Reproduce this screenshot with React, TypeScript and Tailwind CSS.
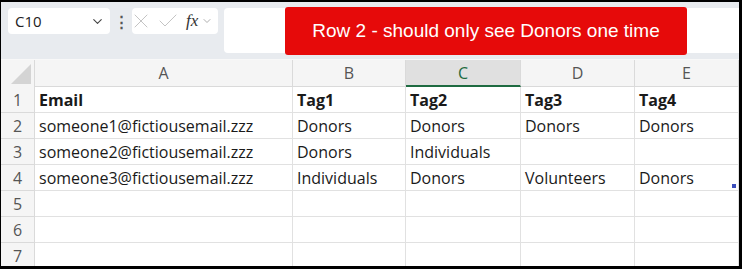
import { ChevronDown, X, Check } from "lucide-react";

const cols = ["A", "B", "C", "D", "E"];

const rows: { cells: string[]; bold?: boolean }[] = [
  { cells: ["Email", "Tag1", "Tag2", "Tag3", "Tag4"], bold: true },
  { cells: ["someone1@fictiousemail.zzz", "Donors", "Donors", "Donors", "Donors"] },
  { cells: ["someone2@fictiousemail.zzz", "Donors", "Individuals", "", ""] },
  { cells: ["someone3@fictiousemail.zzz", "Individuals", "Donors", "Volunteers", "Donors"] },
  { cells: ["", "", "", "", ""] },
  { cells: ["", "", "", "", ""] },
  { cells: ["", "", "", "", ""] },
];

const grid = "grid grid-cols-[34px_258px_113px_115px_114px_1fr]";

export default function App() {
  return (
    <div
      className="relative w-[742px] h-[269px] overflow-hidden border-l border-t-2 border-r-[3px] border-b-[3px] border-black bg-white"
      style={{ fontFamily: "'Open Sans', 'Noto Sans', sans-serif" }}
    >
      {/* formula bar */}
      <div className="flex h-[57px] items-start gap-[6px] bg-[#e8ebef] pl-[7px] pt-[6px]">
        <div className="flex h-[26px] w-[102px] items-center justify-between rounded-[4px] bg-white pl-[7px] pr-[5px] text-[15px] text-[#222]">
          <span>C10</span>
          <ChevronDown size={15} strokeWidth={1.8} className="text-[#444]" />
        </div>
        <div className="flex h-[26px] w-[10px] items-center justify-center text-[15px] font-bold text-[#555]">⋮</div>
        <div className="flex h-[26px] w-[86px] items-center rounded-[4px] bg-white text-[#c4c4c4]">
          <X size={24} strokeWidth={1} className="-ml-[3px]" />
          <Check size={24} strokeWidth={1} className="ml-[3px]" />
          <span className="ml-[6px] text-[17px] italic text-[#333]" style={{ fontFamily: "'Liberation Serif', serif" }}>fx</span>
          <ChevronDown size={12} strokeWidth={1.6} className="ml-[3px] text-[#999]" />
        </div>
        <div className="h-[45px] flex-1 rounded-l-[4px] bg-white" />
      </div>

      {/* annotation banner */}
      <div
        className="absolute left-[284px] top-[5px] flex h-[48px] w-[402px] items-center justify-center rounded-[3px] bg-[#e60a0a] text-[19px] text-white"
        style={{ fontFamily: "'Liberation Sans', Arial, sans-serif" }}
      >
        Row 2 - should only see Donors one time
      </div>

      {/* column headers */}
      <div className={`${grid} h-[28px] border-t border-[#f8f8f8] bg-[#f5f5f5] text-[16px] text-[#555]`}>
        <div className="relative border-r border-[#dadada]">
          <div
            className="absolute bottom-[3px] right-[3px] h-[20px] w-[20px] bg-[#d4d4d4]"
            style={{ clipPath: "polygon(100% 0, 100% 100%, 0 100%)" }}
          />
        </div>
        {cols.map((c) => (
          <div
            key={c}
            className={
              c === "C"
                ? "flex items-center justify-center border-r border-b-2 border-r-[#dadada] border-b-[#1e6b41] bg-[#e0e0e0] text-[#1e6b41]"
                : "flex items-center justify-center border-r border-b border-[#dadada]"
            }
          >
            {c}
          </div>
        ))}
      </div>

      {/* rows */}
      {rows.map((r, i) => (
        <div key={i} className={`${grid} h-[26px] text-[16px] text-[#1a1a1a]`}>
          <div className="flex items-center justify-center border-r border-b border-[#dadada] bg-[#f5f5f5] text-[#555]">
            {i + 1}
          </div>
          {r.cells.map((v, j) => (
            <div
              key={j}
              className={`relative flex items-center border-r border-b border-[#e1e1e1] pl-[4px] whitespace-nowrap ${r.bold ? "font-bold" : ""}`}
            >
              {v}
              {i === 3 && j === 4 && (
                <div className="absolute bottom-[2px] left-[97px] h-[4px] w-[4px] bg-[#3b4dbb]" />
              )}
            </div>
          ))}
        </div>
      ))}
    </div>
  );
}
